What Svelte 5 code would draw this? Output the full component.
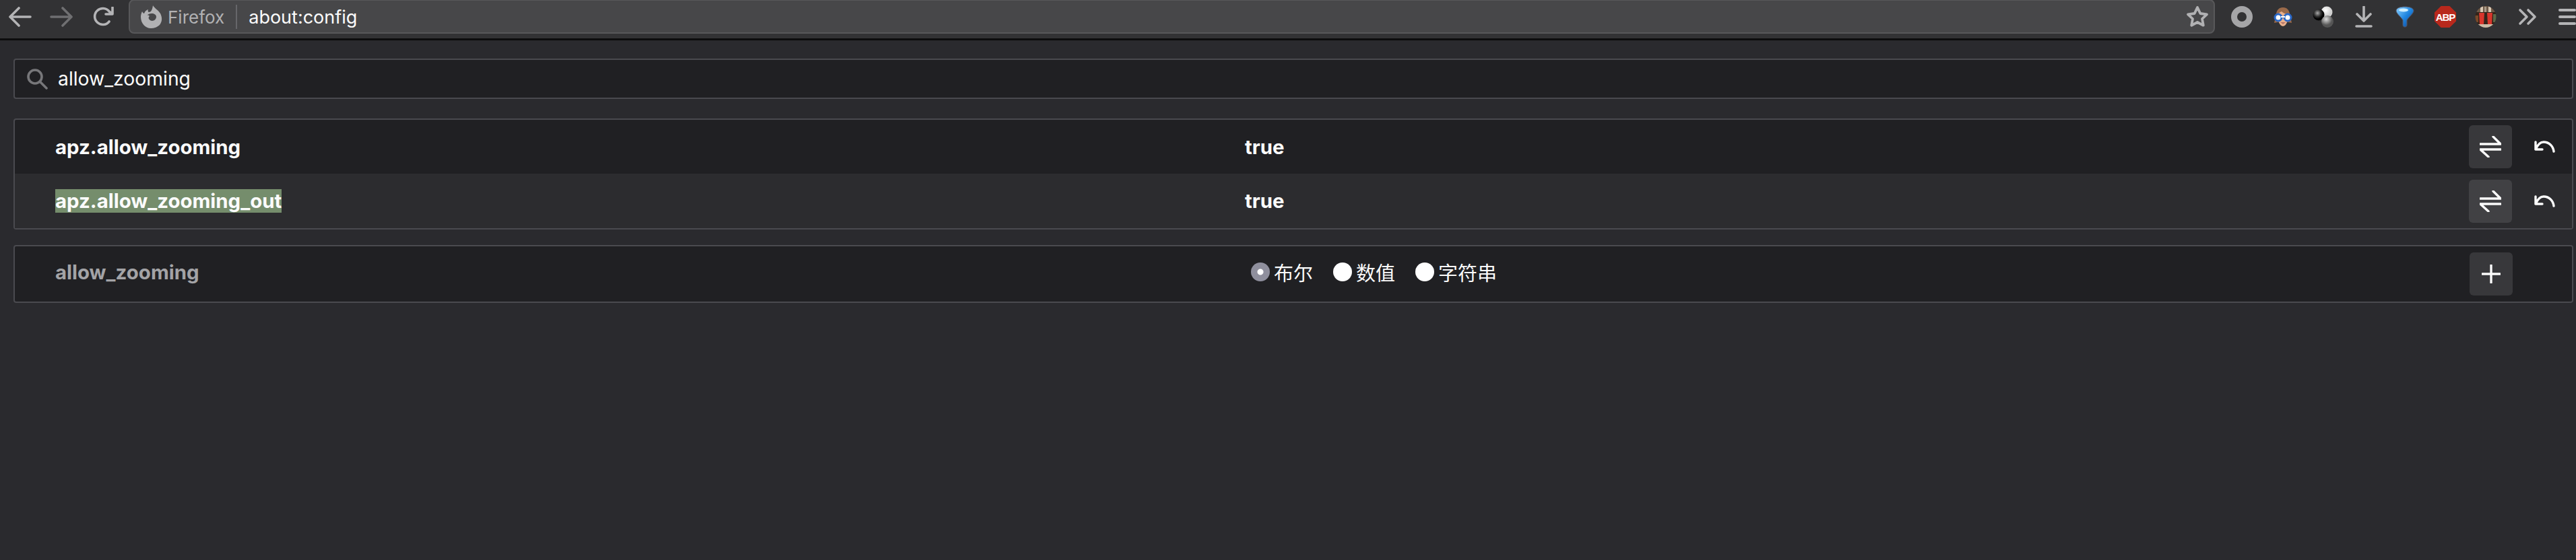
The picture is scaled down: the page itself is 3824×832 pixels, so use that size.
<script>
  const rows = [
    { name: "apz.allow_zooming", value: "true", hit: false },
    { name: "apz.allow_zooming_out", value: "true", hit: true }
  ];
  const kinds = [
    { label: "布尔", on: true },
    { label: "数值", on: false },
    { label: "字符串", on: false }
  ];
</script>

<header class="toolbar">
  <svg class="nav" width="34" height="30" viewBox="0 0 34 30"><path d="M32 15H3M15 2 2 15l13 13" class="line" /></svg>
  <svg class="nav forward" width="34" height="30" viewBox="0 0 34 30"><path d="M2 15h29M19 2l13 13-13 13" class="line dim" /></svg>
  <svg class="nav reload" width="32" height="30" viewBox="0 0 32 30"><path d="M25 22a12 12 0 1 1 0-15l4 3M30 1v10H20" class="line" /></svg>

  <div class="urlbar">
    <svg class="fx" width="32" height="34" viewBox="0 0 32 34"><path fill="#b1b1b3" fill-rule="evenodd" d="M2 9c1 2 2 3 3 3 1-3 3-5 6-6-1 2 0 4 1 4 3 0 5-3 6-10 2 4 8 7 11 12 3 6 3 12-1 17-3 3-8 5-13 5C7 34 0 27 0 17c0-3 1-6 2-8Zm14 3c-3 0-5 1-7 3 2-1 3 0 4 1-1 1-2 2-1 4 1 2 3 3 5 3 3 0 6-3 6-6 0-3-3-5-7-5Z" /></svg>
    <span class="brand">Firefox</span>
    <span class="sep"></span>
    <span class="addr">about:config</span>
    <svg class="star" width="34" height="34" viewBox="0 0 34 34"><path d="m17 3 4.300 9 9.700 1.300-7 6.700 1.800 9.700-8.800-4.700-8.800 4.700 1.800-9.700-7-6.700 9.700-1.300Z" fill="none" stroke="#b1b1b3" stroke-width="3.800" stroke-linejoin="round" /></svg>
  </div>

  <div class="tools">
    <svg class="tool ring" width="32" height="32" viewBox="0 0 32 32"><circle cx="16" cy="16" r="11.500" fill="none" stroke="#a5a5a7" stroke-width="9" /></svg>
    <svg class="tool avatar" width="30" height="30" viewBox="0 0 30 30">
      <path fill="#9a6a4a" d="M15 1c6 0 9 4 10 9l3 14-5-1H7l-5 1 3-14C6 5 9 1 15 1Z" />
      <path fill="#e8b08c" d="M7 12c2-3 4-4 6-5 3 3 7 4 10 5 0 8-3 17-8 17S7 20 7 12Z" />
      <path fill="#b5766a" d="M11 23h8l-4 3Z" />
      <circle cx="8" cy="16" r="5" fill="#fff" stroke="#2a68c8" stroke-width="3" />
      <circle cx="22" cy="16" r="5" fill="#fff" stroke="#2a68c8" stroke-width="3" />
      <path d="M12 15h6" stroke="#fff" stroke-width="2" />
    </svg>
    <svg class="tool balls" width="32" height="32" viewBox="0 0 32 32">
      <defs>
        <radialGradient id="ballW" cx="40%" cy="35%"><stop offset="0" stop-color="#fff" /><stop offset="1" stop-color="#cfcfcf" /></radialGradient>
        <radialGradient id="ballK" cx="40%" cy="35%"><stop offset="0" stop-color="#aaa" /><stop offset="0.6" stop-color="#333" /><stop offset="1" stop-color="#000" /></radialGradient>
        <radialGradient id="ballG" cx="40%" cy="30%"><stop offset="0" stop-color="#ddd" /><stop offset="1" stop-color="#555" /></radialGradient>
      </defs>
      <circle cx="21" cy="9" r="8.500" fill="url(#ballW)" />
      <circle cx="9" cy="13" r="8.500" fill="url(#ballK)" />
      <circle cx="22" cy="23" r="9" fill="url(#ballG)" />
    </svg>
    <svg class="tool download" width="26" height="32" viewBox="0 0 26 32"><path d="M13 1v20M3 12l10 10 10-10M2 30h22" class="line" /></svg>
    <svg class="tool funnel" width="28" height="32" viewBox="0 0 28 32">
      <defs><linearGradient id="fun" x1="0" y1="0" x2="1" y2="1"><stop offset="0" stop-color="#8fd4ff" /><stop offset="0.5" stop-color="#1f86e0" /><stop offset="1" stop-color="#0b3f90" /></linearGradient></defs>
      <path d="M14 1c7 0 13 2 13 6 0 4-8 10-10 14v7c0 2-1 3-3 3s-3-1-3-3v-7C9 17 1 11 1 7c0-4 6-6 13-6Z" fill="url(#fun)" stroke="#556" stroke-width="1" />
      <ellipse cx="12" cy="6" rx="7" ry="2.500" fill="#cdeeff" />
    </svg>
    <span class="tool abp">ABP</span>
    <svg class="tool photo" width="32" height="32" viewBox="0 0 32 32">
      <defs><clipPath id="photoClip"><ellipse cx="16" cy="16" rx="15.500" ry="16" /></clipPath></defs>
      <g clip-path="url(#photoClip)">
        <rect width="32" height="32" fill="#33241a" />
        <rect y="0" width="32" height="9" fill="#6e5a48" />
        <rect x="8" y="0" width="4" height="9" fill="#d8c8b4" />
        <rect x="14" y="1" width="3" height="8" fill="#a89a88" />
        <rect x="20" y="0" width="4" height="9" fill="#d8c8b4" />
        <rect x="0" y="14" width="5" height="10" fill="#7a4a2a" />
        <rect x="27" y="12" width="5" height="12" fill="#5c6a4a" />
        <path d="M6 10h8l-1 17H7Z" fill="#d8362c" />
        <path d="M18 10h8l-1 17h-6Z" fill="#d8362c" />
        <rect x="0" y="27" width="32" height="5" fill="#cbbba6" />
      </g>
    </svg>
    <svg class="tool chevrons" width="28" height="26" viewBox="0 0 28 26"><path d="m3 3 10 10L3 23M15 3l10 10-10 10" class="line" /></svg>
    <span class="burger"><i></i><i></i><i></i></span>
  </div>
</header>
<div class="rule"></div>

<main>
  <div class="search">
    <svg width="32" height="32" viewBox="0 0 32 32"><circle cx="13" cy="13" r="10" fill="none" stroke="#77777a" stroke-width="3.600" /><path d="m20 20 10 10" stroke="#77777a" stroke-width="3.600" stroke-linecap="round" /></svg>
    <span>allow_zooming</span>
  </div>

  <section class="table">
    {#each rows as row}
      <div class="row">
        <div class="name"><span class:hit={row.hit}>{row.name}</span></div>
        <div class="value">{row.value}</div>
        <button class="act" aria-label="toggle">
          <svg width="32" height="32" viewBox="0 0 32 32"><path d="M1 12h30L20 1M31 20H1l12 11" class="line white" /></svg>
        </button>
        <svg class="undo" width="32" height="18" viewBox="0 0 32 18"><path d="M29 16C28 8 22 2 14 2 9 2 5 6 2 13M2 2v11h10" class="line white" /></svg>
      </div>
    {/each}
  </section>

  <section class="table add">
    <div class="row">
      <div class="name">allow_zooming</div>
      <div class="kinds">
        {#each kinds as kind}
          <label class="kind">
            <span class="radio" class:on={kind.on}></span>
            {kind.label}
          </label>
        {/each}
      </div>
      <button class="act" aria-label="add">
        <svg width="28" height="28" viewBox="0 0 28 28"><path d="M14 1v26M1 14h26" class="line white" /></svg>
      </button>
    </div>
  </section>
</main>

<style>
  :global(body) {
    background: #2a2a2e;
    color: #fbfbfb;
    font-family: Inter, "Noto Sans CJK SC", sans-serif;
  }
  svg {
    display: block;
    flex: none;
  }
  .line {
    fill: none;
    stroke: #b4b4b6;
    stroke-width: 3.600;
    stroke-linecap: round;
    stroke-linejoin: round;
  }
  .dim {
    stroke: #6f6f71;
  }
  .white {
    stroke: #fbfbfb;
    stroke-width: 3.400;
  }
  .toolbar {
    display: flex;
    align-items: flex-start;
    height: 57px;
    background: #323234;
    overflow: hidden;
  }
  .rule {
    height: 3px;
    background: #0c0c0d;
  }
  .nav {
    margin: 10px 0 0 13px;
  }
  .forward {
    margin-left: 27px;
  }
  .reload {
    margin-left: 29px;
    margin-right: 22px;
  }
  .urlbar {
    display: flex;
    align-items: center;
    width: 3100px;
    height: 51px;
    box-sizing: border-box;
    margin-top: -1px;
    padding: 0 7px 0 16px;
    background: #474749;
    border: 2px solid #58585a;
    border-radius: 8px;
    font-size: 27px;
  }
  .fx {
    margin-right: 8px;
  }
  .brand {
    color: #b1b1b3;
    font-size: 26px;
    padding-top: 2px;
  }
  .sep {
    width: 2px;
    height: 36px;
    margin: 0 17px;
    background: #66666a;
  }
  .addr {
    flex: 1;
    color: #fbfbfb;
    padding-top: 2px;
  }
  .tools {
    display: flex;
    align-items: center;
    height: 50px;
  }
  .tool {
    flex: none;
  }
  .ring {
    margin-left: 24px;
  }
  .avatar {
    margin-left: 30px;
  }
  .balls {
    margin-left: 29px;
  }
  .download {
    margin-left: 31px;
  }
  .funnel {
    margin-left: 34px;
  }
  .abp {
    display: flex;
    align-items: center;
    justify-content: center;
    width: 32px;
    height: 32px;
    margin-left: 30px;
    background: #b8281c;
    clip-path: polygon(30% 0, 70% 0, 100% 30%, 100% 70%, 70% 100%, 30% 100%, 0 70%, 0 30%);
    color: #fff;
    font-family: "Liberation Sans", sans-serif;
    font-size: 15px;
    font-weight: 700;
    letter-spacing: -1px;
  }
  .photo {
    margin-left: 28px;
  }
  .chevrons {
    margin-left: 32px;
  }
  .burger {
    display: flex;
    flex-direction: column;
    gap: 6px;
    width: 26px;
    margin-left: 32px;
  }
  .burger i {
    display: block;
    height: 4px;
    border-radius: 2px;
    background: #b4b4b6;
  }
  main {
    padding: 27px 4px 0 20px;
  }
  .search {
    display: flex;
    align-items: center;
    gap: 15px;
    height: 60px;
    box-sizing: border-box;
    padding-left: 17px;
    background: #202023;
    border: 2px solid #4a4a4f;
    border-radius: 4px;
    font-size: 28.300px;
  }
  .table {
    margin-top: 29px;
    background: #202023;
    border: 2px solid #4a4a4f;
    border-radius: 4px;
  }
  .add {
    margin-top: 23px;
    padding-bottom: 1px;
  }
  .row {
    display: flex;
    align-items: center;
    height: 80px;
  }
  .table:not(.add) .row:nth-child(2) {
    height: 81px;
    background: #2c2c2f;
  }
  .add .row {
    height: 81px;
  }
  .name {
    width: 1826px;
    flex: none;
    padding-left: 60px;
    box-sizing: border-box;
    font-size: 29.400px;
    font-weight: 700;
  }
  .add .name {
    color: #a3a3a6;
    padding-bottom: 5px;
  }
  .hit {
    background: #758d6c;
  }
  .value {
    flex: 1;
    font-size: 29.400px;
    font-weight: 700;
  }
  .kinds {
    flex: 1;
    display: flex;
    gap: 30px;
    padding: 0 0 5px 9px;
  }
  .kind {
    display: flex;
    align-items: center;
    gap: 6px;
    font-size: 29px;
  }
  .radio {
    width: 28px;
    height: 28px;
    border-radius: 50%;
    background: #fff;
  }
  .radio.on {
    background: radial-gradient(circle, #fff 0 4px, #8f8f9d 5px);
  }
  .act {
    display: flex;
    align-items: center;
    justify-content: center;
    width: 64px;
    height: 64px;
    padding: 0;
    margin-right: 33px;
    background: #38383b;
    border: 0;
    border-radius: 6px;
  }
  .row:nth-child(2) .act {
    background: #414144;
  }
  .add .act {
    margin-right: 88px;
  }
  .undo {
    margin-right: 24px;
  }
</style>
